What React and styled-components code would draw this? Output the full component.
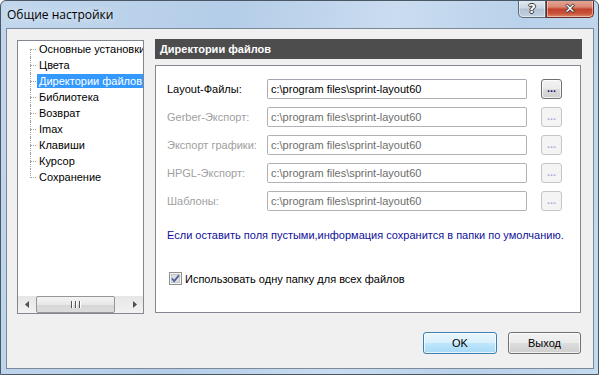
import React from 'react';
import styled, { createGlobalStyle } from 'styled-components';

const Global = createGlobalStyle`
  html, body { margin: 0; padding: 0; background: #fff; }
  body { font-family: "Liberation Sans", Arial, sans-serif; font-size: 11px; }
`

const Frame = styled.div`
  box-sizing: border-box;
  width: 599px;
  height: 375px;
  display: flex;
  flex-direction: column;
  border: 1px solid #4a5866;
  border-radius: 6px 6px 0 0;
  background: linear-gradient(100deg, #c2d7ed 0%, #b4cde8 35%, #cadcf0 60%, #b9d1ea 80%, #c6daef 100%);
  overflow: hidden;
`
const TitleBar = styled.div`
  display: flex;
  justify-content: space-between;
  align-items: flex-start;
  height: 27px;
`
const Title = styled.div`
  font-family: "Open Sans", "Noto Sans", sans-serif;
  font-size: 12px;
  color: #000;
  padding: 5px 0 0 6px;
  text-shadow: 0 0 8px rgba(255,255,255,0.9);
`
const Controls = styled.div`
  display: flex;
  margin-right: 4px;
  margin-top: -1px;
`
const CtrlButton = styled.div`
  height: 18px;
  width: ${p => p.$w}px;
  box-sizing: border-box;
  border: 1px solid ${p => (p.$close ? '#6b2b22' : '#5d6a78')};
  border-top: none;
  border-radius: ${p => (p.$close ? '0 0 5px 0' : '0 0 0 5px')};
  background: ${p =>
    p.$close
      ? 'linear-gradient(#e8a797 0%, #d98a76 40%, #c3412b 55%, #c9553c 80%, #dd8a6a 100%)'
      : 'linear-gradient(#e4ebf3 0%, #ccd8e5 45%, #b3c3d4 55%, #c3d1e0 100%)'};
  display: flex;
  align-items: center;
  justify-content: center;
  color: #fff;
  font-family: "DejaVu Sans", sans-serif;
  font-weight: bold;
  font-size: ${p => (p.$close ? 13 : 13)}px;
  text-shadow: -1px 0 #333, 1px 0 #333, 0 -1px #333, 0 1px #333;
  box-shadow: inset 0 0 0 1px rgba(255,255,255,0.45);
`

const Client = styled.div`
  flex: 1;
  margin: 0 4px 5px 5px;
  background: #f0f0f0;
  border: 1px solid #7b8a9a;
  display: flex;
  flex-direction: column;
  padding: 10px 11px 0 10px;
`
const MainRow = styled.div`
  display: flex;
  gap: 11px;
`

const Tree = styled.div`
  box-sizing: border-box;
  width: 127px;
  height: 274px;
  margin-top: 1px;
  border: 1px solid #828790;
  background: #fff;
  display: flex;
  flex-direction: column;
`
const TreeList = styled.div`
  flex: 1;
  overflow: hidden;
`
const TreeItem = styled.div`
  position: relative;
  height: 16px;
  line-height: 16px;
  padding-left: 19px;
  white-space: nowrap;
  color: #000;
  &::before {
    content: '';
    position: absolute;
    left: 12px;
    top: 8px;
    width: 6px;
    border-top: 1px dotted #a0a0a0;
  }
  &::after {
    content: '';
    position: absolute;
    left: 12px;
    top: 0;
    height: 16px;
    border-left: 1px dotted #a0a0a0;
  }
  &:first-child::after { top: 8px; height: 8px; }
  &:last-child::after { height: 9px; }
`
const ItemLabel = styled.span`
  display: inline-block;
  padding: 0 1px 0 2px;
  margin-left: 0;
  height: 14px;
  line-height: 14px;
  background: ${p => (p.$sel ? '#3399ff' : 'transparent')};
  color: ${p => (p.$sel ? '#fff' : '#000')};
`

const HScroll = styled.div`
  height: 17px;
  display: flex;
  align-items: stretch;
  background: linear-gradient(#e6e6e6, #f2f2f2);
`
const Arrow = styled.div`
  width: 17px;
  display: flex;
  align-items: center;
  justify-content: center;
`
const Track = styled.div`
  flex: 1;
  display: flex;
  align-items: stretch;
  padding: 0 1px;
`
const Thumb = styled.div`
  box-sizing: border-box;
  width: 79px;
  border: 1px solid #969696;
  border-radius: 2px;
  background: linear-gradient(#f3f3f3 0%, #e8e8e8 50%, #d6d6d6 51%, #dcdcdc 100%);
  display: flex;
  align-items: center;
  justify-content: center;
  gap: 1px;
`
const Grip = styled.span`
  width: 1px;
  height: 7px;
  background: #555;
  box-shadow: 1px 0 #fff;
  margin: 0 1px;
`

const Panel = styled.div`
  width: 427px;
  display: flex;
  flex-direction: column;
`
const Header = styled.div`
  height: 20px;
  background: #4d4d4d;
  color: #fff;
  font-weight: bold;
  line-height: 20px;
  padding-left: 5px;
  margin-bottom: 6px;
`
const Box = styled.div`
  box-sizing: border-box;
  width: 426px;
  height: 248px;
  border: 1px solid #828790;
  background: #fff;
  padding: 13px 0 0 11px;
  display: flex;
  flex-direction: column;
`
const Rows = styled.div`
  display: flex;
  flex-direction: column;
  gap: 8px;
`
const Row = styled.div`
  display: flex;
  align-items: center;
  height: 20px;
`
const Label = styled.div`
  width: 100px;
  color: ${p => (p.$off ? '#a0a0a0' : '#000')};
`
const Input = styled.div`
  box-sizing: border-box;
  width: 260px;
  height: 20px;
  border: 1px solid ${p => (p.$off ? '#afb3b7' : '#abadb3')};
  border-top-color: ${p => (p.$off ? '#afb3b7' : '#a3a8b0')};
  border-radius: 2px;
  background: #fff;
  padding-left: 3px;
  line-height: 18px;
  color: ${p => (p.$off ? '#6d6d6d' : '#000')};
`
const Browse = styled.div`
  box-sizing: border-box;
  width: 21px;
  height: 20px;
  margin-left: 14px;
  border: 1px solid ${p => (p.$off ? '#c5c5c5' : '#707070')};
  border-radius: 3px;
  background: ${p =>
    p.$off ? '#f4f4f4' : 'linear-gradient(#f2f2f2 0%, #ebebeb 50%, #dddddd 51%, #cfcfcf 100%)'};
  box-shadow: inset 0 0 0 1px ${p => (p.$off ? 'transparent' : 'rgba(255,255,255,0.7)')};
  color: ${p => (p.$off ? '#b8a8d8' : '#1a1070')};
  font-weight: bold;
  text-align: center;
  line-height: 17px;
  letter-spacing: 0px;
`
const Info = styled.div`
  margin-top: 17px;
  color: #10109a;
  line-height: 14px;
`
const CheckRow = styled.div`
  margin-top: 30px;
  display: flex;
  align-items: center;
  gap: 3px;
  margin-left: 2px;
`

const Buttons = styled.div`
  display: flex;
  justify-content: flex-end;
  gap: 11px;
  margin-top: 18px;
  padding-right: 1px;
`
const Btn = styled.div`
  box-sizing: border-box;
  width: ${p => p.$w}px;
  height: 22px;
  border: 1px solid ${p => (p.$def ? '#3c7fb1' : '#707070')};
  border-radius: 3px;
  background: ${p =>
    p.$def
      ? 'linear-gradient(#eaf6fd 0%, #d9f0fc 50%, #bee6fd 51%, #a7d9f5 100%)'
      : 'linear-gradient(#f2f2f2 0%, #ebebeb 50%, #dddddd 51%, #cfcfcf 100%)'};
  box-shadow: inset 0 0 0 1px rgba(255,255,255,0.7);
  display: flex;
  align-items: center;
  justify-content: center;
  color: #000;
`

const Checkbox = () => (
  <svg width="13" height="13" viewBox="0 0 13 13">
    <rect x="0.5" y="0.5" width="12" height="12" fill="#f4f4f4" stroke="#8e8f8f" />
    <rect x="2.5" y="2.5" width="8" height="8" fill="#dcdde0" stroke="#c4c6ca" />
    <path d="M3 6.5 L5.2 9 L10 3.2" fill="none" stroke="#4d5f93" strokeWidth="1.8" />
  </svg>
)

const ArrowIcon = ({ dir }) => (
  <svg width="4" height="7" viewBox="0 0 4 7">
    {dir === 'l' ? <path d="M4 0 L0 3.5 L4 7 Z" fill="#505050" /> : <path d="M0 0 L4 3.5 L0 7 Z" fill="#505050" />}
  </svg>
)

const treeItems = [
  'Основные установки',
  'Цвета',
  'Директории файлов',
  'Библиотека',
  'Возврат',
  'Imax',
  'Клавиши',
  'Курсор',
  'Сохранение',
]

const rows = [
  { label: 'Layout-Файлы:', off: false },
  { label: 'Gerber-Экспорт:', off: true },
  { label: 'Экспорт графики:', off: true },
  { label: 'HPGL-Экспорт:', off: true },
  { label: 'Шаблоны:', off: true },
]

const App = () => (
  <>
    <Global />
    <Frame>
      <TitleBar>
        <Title>Общие настройки</Title>
        <Controls>
          <CtrlButton $w={28}>?</CtrlButton>
          <CtrlButton $w={48} $close>✕</CtrlButton>
        </Controls>
      </TitleBar>
      <Client>
        <MainRow>
          <Tree>
            <TreeList>
              {treeItems.map((t, i) => (
                <TreeItem key={t}>
                  <ItemLabel $sel={i === 2}>{t}</ItemLabel>
                </TreeItem>
              ))}
            </TreeList>
            <HScroll>
              <Arrow><ArrowIcon dir="l" /></Arrow>
              <Track>
                <Thumb><Grip /><Grip /><Grip /></Thumb>
              </Track>
              <Arrow><ArrowIcon dir="r" /></Arrow>
            </HScroll>
          </Tree>
          <Panel>
            <Header>Директории файлов</Header>
            <Box>
              <Rows>
                {rows.map(r => (
                  <Row key={r.label}>
                    <Label $off={r.off}>{r.label}</Label>
                    <Input $off={r.off}>c:\program files\sprint-layout60</Input>
                    <Browse $off={r.off}>...</Browse>
                  </Row>
                ))}
              </Rows>
              <Info>Если оставить поля пустыми,информация сохранится в папки по умолчанию.</Info>
              <CheckRow>
                <Checkbox />
                <span>Использовать одну папку для всех файлов</span>
              </CheckRow>
            </Box>
          </Panel>
        </MainRow>
        <Buttons>
          <Btn $w={74} $def>OK</Btn>
          <Btn $w={73}>Выход</Btn>
        </Buttons>
      </Client>
    </Frame>
  </>
);

export default App;
